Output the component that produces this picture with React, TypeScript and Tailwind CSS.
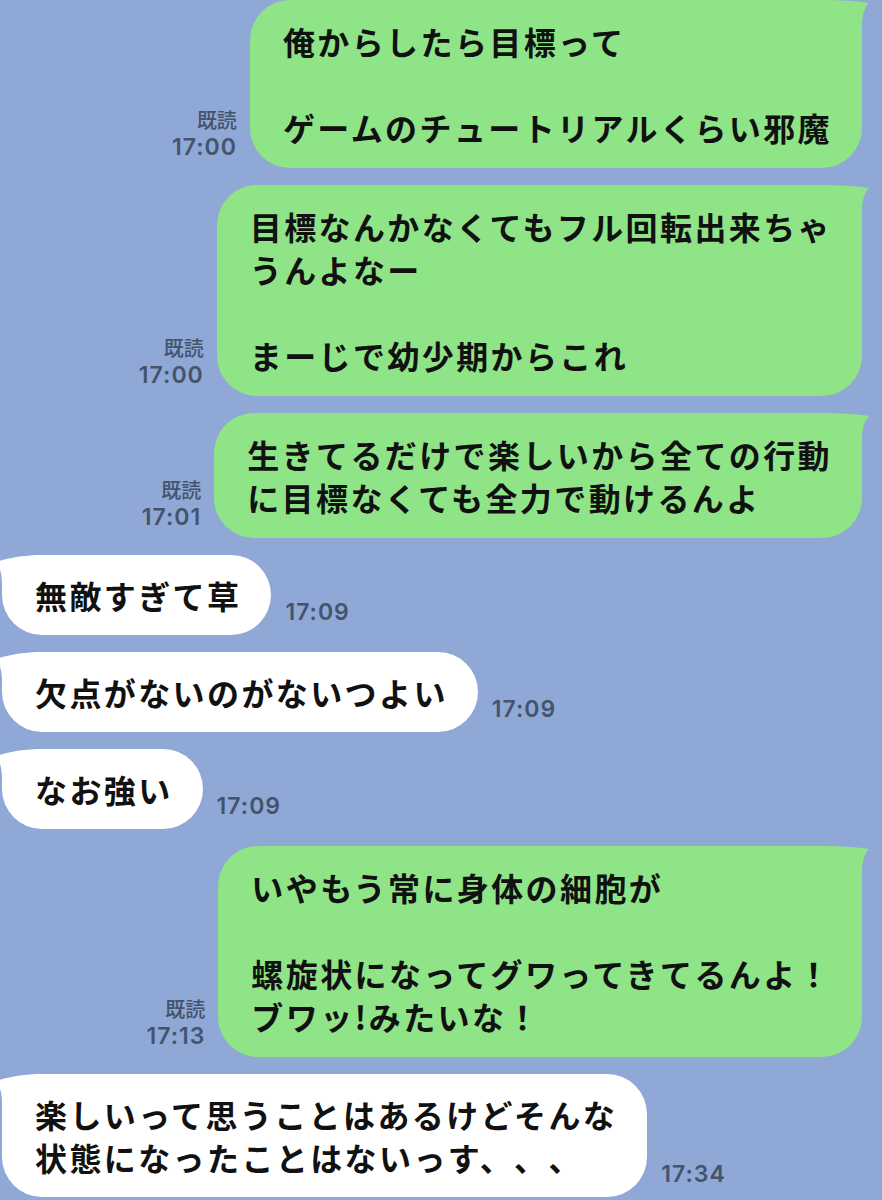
import React from 'react';

type Msg = { side: 'me' | 'them'; lines: string[]; time: string };

const messages: Msg[] = [
  { side: 'me', lines: ['俺からしたら目標って', '', 'ゲームのチュートリアルくらい邪魔'], time: '17:00' },
  { side: 'me', lines: ['目標なんかなくてもフル回転出来ちゃ', 'うんよなー', '', 'まーじで幼少期からこれ'], time: '17:00' },
  { side: 'me', lines: ['生きてるだけで楽しいから全ての行動', 'に目標なくても全力で動けるんよ'], time: '17:01' },
  { side: 'them', lines: ['無敵すぎて草'], time: '17:09' },
  { side: 'them', lines: ['欠点がないのがないつよい'], time: '17:09' },
  { side: 'them', lines: ['なお強い'], time: '17:09' },
  { side: 'me', lines: ['いやもう常に身体の細胞が', '', '螺旋状になってグワってきてるんよ！', 'ブワッ!みたいな！'], time: '17:13' },
  { side: 'them', lines: ['楽しいって思うことはあるけどそんな', '状態になったことはないっす、、、'], time: '17:34' },
];

const textFont = { fontFamily: '"Noto Sans CJK JP", "Noto Sans", sans-serif' };
const timeFont = { fontFamily: 'Inter, "Liberation Sans", "Noto Sans CJK JP", sans-serif' };

const Lines = ({ lines }: { lines: string[] }) => (
  <div
    className="text-[32px] leading-[43px] tracking-[2.4px] font-semibold text-[#111] [text-spacing-trim:space-all]"
    style={textFont}
  >
    {lines.map((l, i) => (
      <div key={i} className="whitespace-nowrap h-[43px]">
        {l}
      </div>
    ))}
  </div>
);

const TailRight = () => (
  <svg className="absolute top-0 right-[-8px]" width="48" height="40" viewBox="0 0 48 40">
    <path d="M0 0 C18 0 36 1 47 3 C42 8 40 16 40 27 L40 40 L0 40 Z" fill="#8ee487" />
  </svg>
);

const TailLeft = () => (
  <svg className="absolute top-0 left-[-6px]" width="46" height="40" viewBox="0 0 46 40">
    <path d="M46 0 C28 0 12 3 0 7 C4 12 6 20 6 30 L6 40 L46 40 Z" fill="#ffffff" />
  </svg>
);

export default function App() {
  return (
    <div className="w-[882px] h-[1200px] overflow-hidden bg-[#8fa8d5]">
      <div className="flex flex-col gap-[17px]">
        {messages.map((m, i) =>
          m.side === 'me' ? (
            <div key={i} className="flex justify-end items-end gap-[13px] pr-[20px]">
              <div className="flex flex-col items-end text-[#45536d] mb-[7px]">
                <span className="text-[20px] leading-[26px] font-medium" style={textFont}>
                  既読
                </span>
                <span className="text-[23px] leading-[28px] tracking-[1px] font-semibold" style={timeFont}>
                  {m.time}
                </span>
              </div>
              <div className="relative bg-[#8ee487] rounded-[40px] pl-[33px] pr-[30px] pt-[20px] pb-[19px]">
                <TailRight />
                <div className="relative">
                  <Lines lines={m.lines} />
                </div>
              </div>
            </div>
          ) : (
            <div key={i} className="flex items-end gap-[14px] pl-[2px]">
              <div className="relative bg-white rounded-[40px] pl-[33px] pr-[30px] pt-[19px] pb-[18px]">
                <TailLeft />
                <div className="relative">
                  <Lines lines={m.lines} />
                </div>
              </div>
              <span
                className="text-[23px] leading-[28px] tracking-[1px] font-semibold text-[#45536d] mb-[9px]"
                style={timeFont}
              >
                {m.time}
              </span>
            </div>
          )
        )}
      </div>
    </div>
  );
}
